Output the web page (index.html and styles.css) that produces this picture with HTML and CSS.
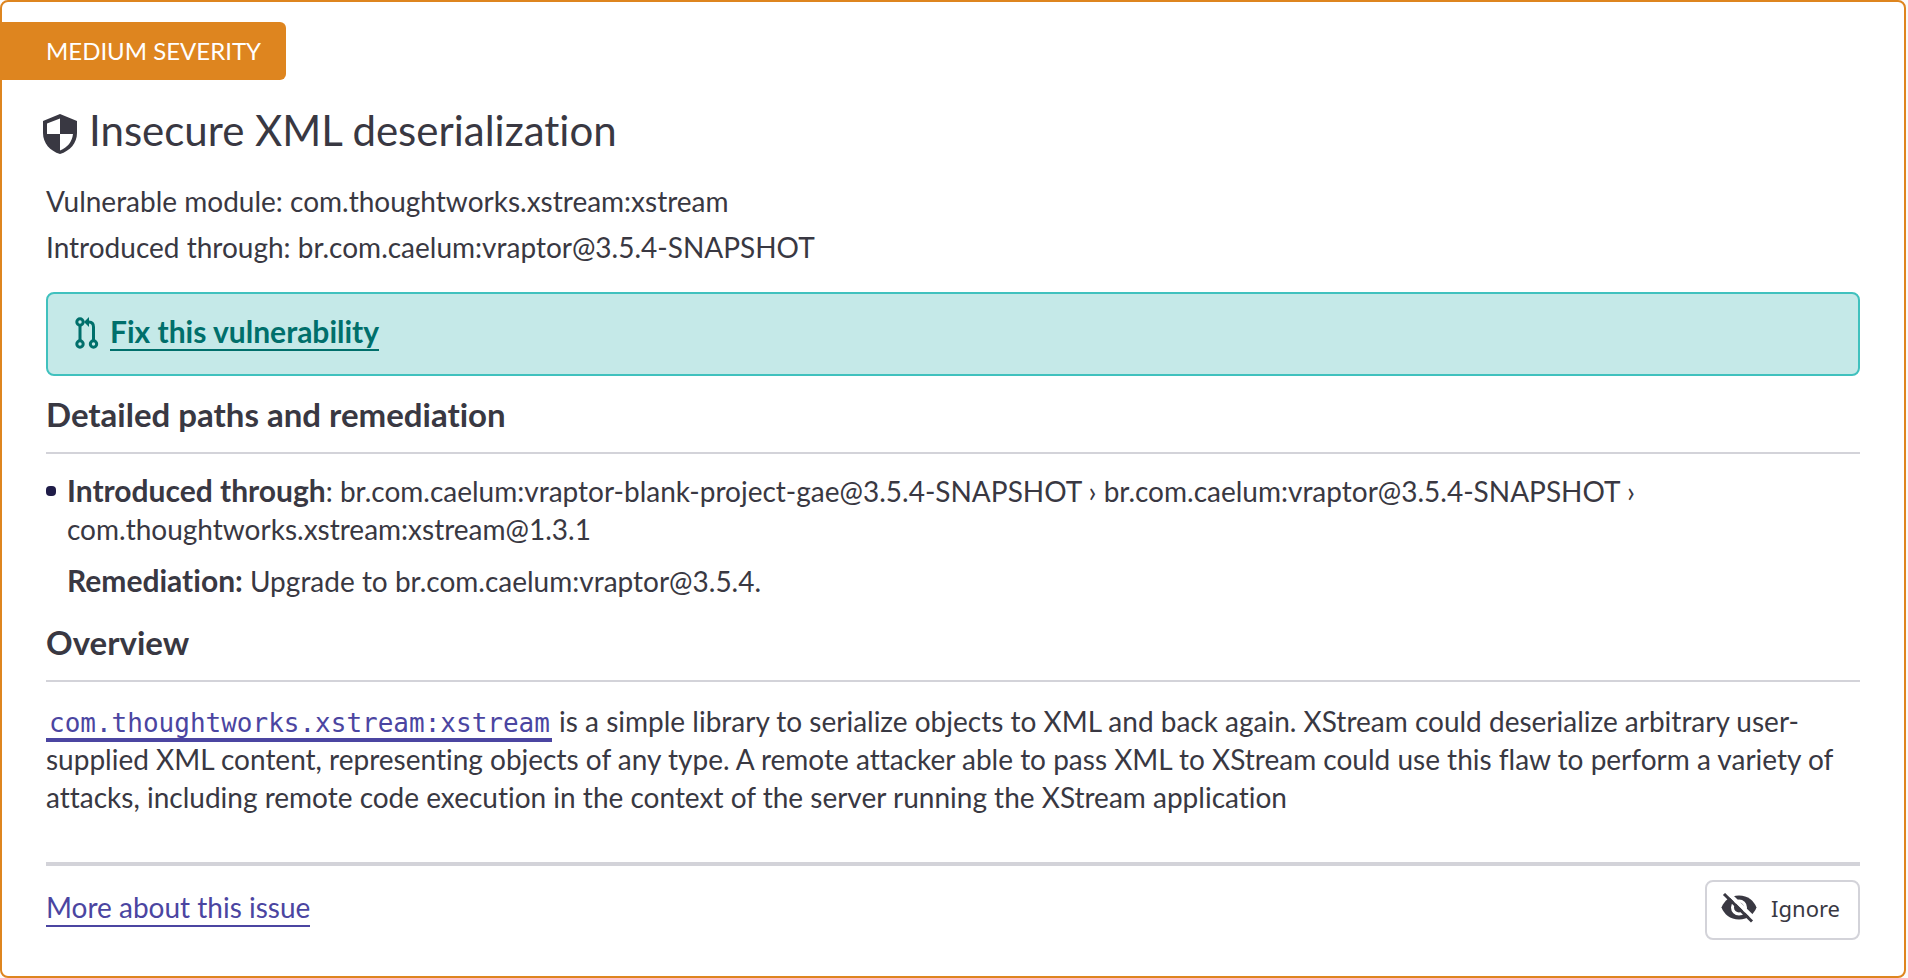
FILE: index.html
```html
<!DOCTYPE html>
<html lang="en">
<head>
<meta charset="utf-8">
<meta name="viewport" content="width=device-width, initial-scale=1">
<title>Insecure XML deserialization</title>
<link rel="stylesheet" href="styles.css">
</head>
<body>
<article class="card">
  <span class="badge">MEDIUM SEVERITY</span>
  <h1 class="title">
    <svg class="shield" viewBox="0 0 34 40" aria-hidden="true">
      <path fill="currentColor" fill-rule="evenodd" d="M17 0 34 7V19C34 29 27 37 17 40 7 37 0 29 0 19V7ZM17 4.500V20H30C29 28 24.500 33.500 17 36.500V20H4V9.500Z"/>
    </svg>
    Insecure XML deserialization
  </h1>
  <ul class="meta">
    <li>Vulnerable module: com.thoughtworks.xstream:xstream</li>
    <li>Introduced through: br.com.caelum:vraptor@3.5.4-SNAPSHOT</li>
  </ul>
  <div class="fix">
    <svg class="pull" viewBox="0 0 24 32" aria-hidden="true">
      <g fill="none" stroke="currentColor" stroke-width="3">
        <circle cx="5" cy="5" r="3.200"/><circle cx="5" cy="27" r="3.200"/><circle cx="18.500" cy="27" r="3.200"/>
        <path d="M5 8v16M18.500 24V10Q18.500 5 14 5H12"/>
      </g>
      <path fill="currentColor" d="M9 5 14 0V10Z"/>
    </svg>
    <a class="fix-link" href="#fix">Fix this vulnerability</a>
  </div>
  <h2 class="heading">Detailed paths and remediation</h2>
  <ul class="paths">
    <li class="path">
      <p class="text"><strong>Introduced through</strong>: br.com.caelum:vraptor-blank-project-gae@3.5.4-SNAPSHOT › br.com.caelum:vraptor@3.5.4-SNAPSHOT › com.thoughtworks.xstream:xstream@1.3.1</p>
      <p class="text"><strong>Remediation:</strong> Upgrade to br.com.caelum:vraptor@3.5.4.</p>
    </li>
  </ul>
  <h2 class="heading">Overview</h2>
  <p class="text overview"><a class="package" href="#package"><code>com.thoughtworks.xstream:xstream</code></a> is a simple library to serialize objects to XML and back again. XStream could deserialize arbitrary user-supplied XML content, representing objects of any type. A remote attacker able to pass XML to XStream could use this flaw to perform a variety of attacks, including remote code execution in the context of the server running the XStream application</p>
  <footer class="footer">
    <a class="more" href="#more">More about this issue</a>
    <button class="ignore" type="button">
      <svg class="eye" viewBox="0 0 36 30" aria-hidden="true">
        <path fill="currentColor" d="M18 2.500C27 2.500 33 8 35.500 14.500 33 21 27 26.500 18 26.500S3 21 .5 14.500C3 8 9 2.500 18 2.500Z"/>
        <circle cx="18" cy="14.500" r="6.500" fill="none" stroke="#fff" stroke-width="3"/>
        <path stroke="#fff" stroke-width="4" d="M6 -1 34 26.500"/>
        <path stroke="currentColor" stroke-width="3" d="M3 1 31 28.500"/>
      </svg>
      Ignore
    </button>
  </footer>
</article>
</body>
</html>
```
FILE: styles.css
```css
* {
  box-sizing: border-box;
}

body {
  margin: 0;
  padding-right: 2px;
  background: #fafafc;
  color: #393842;
  font: 28px/38px Lato, "Open Sans", sans-serif;
  font-variant-ligatures: none;
}

h1, h2, p, ul {
  margin: 0;
  padding: 0;
}

ul {
  list-style: none;
}

strong {
  font-size: 30px;
  line-height: 36px;
}

.card {
  padding: 20px 44px 36px;
  border: 2px solid #de851f;
  border-radius: 8px;
  background: #fff;
}

.badge {
  display: block;
  width: fit-content;
  margin-left: -44px;
  padding: 10px 25px 10px 44px;
  border-radius: 0 6px 6px 0;
  background: #de851f;
  color: #fff;
  font-size: 24px;
}

.title {
  display: flex;
  align-items: center;
  gap: 12px;
  margin: 24px 0 22px -3px;
  font-size: 42px;
  font-weight: 400;
  line-height: 52px;
}

.shield {
  width: 34px;
  height: 40px;
  margin-top: 8px;
}

.meta {
  line-height: 46px;
}

.fix {
  display: flex;
  align-items: center;
  gap: 11px;
  margin: 22px 0 18px;
  padding: 19px 27px 23px;
  border: 2px solid #40c1be;
  border-radius: 8px;
  background: #c5e9e8;
  color: #006f6b;
}

.pull {
  width: 24px;
  height: 32px;
  margin-top: 2px;
}

.fix-link {
  border-bottom: 2px solid;
  color: inherit;
  font-size: 30px;
  font-weight: 700;
  line-height: 36px;
  text-decoration: none;
}

.heading {
  padding-bottom: 18px;
  border-bottom: 2px solid #d3d3d9;
  font-size: 33px;
  line-height: 40px;
}

.paths {
  margin: 18px 0 22px;
}

.path {
  display: grid;
  gap: 14px;
  position: relative;
  padding-left: 21px;
}

.path::before {
  content: "";
  position: absolute;
  top: 14px;
  left: 0;
  width: 10px;
  height: 10px;
  border-radius: 4px;
  background: #1f1c48;
}

.overview {
  margin-top: 20px;
}

.package {
  padding: 0 2px 0 3px;
  border-bottom: 4px solid;
  color: #4b45a1;
  text-decoration: none;
}

.package code {
  font: 26px/30px "DejaVu Sans Mono", monospace;
}

.footer {
  display: flex;
  align-items: flex-start;
  justify-content: space-between;
  margin-top: 46px;
  padding-top: 14px;
  border-top: 4px solid #d3d3d9;
}

.more {
  margin-top: 9px;
  border-bottom: 2px solid;
  color: #4b45a1;
  line-height: 36px;
  text-decoration: none;
}

.ignore {
  display: flex;
  align-items: center;
  gap: 14px;
  padding: 9px 18px 13px 14px;
  border: 2px solid #d3d3d9;
  border-radius: 8px;
  background: #fff;
  color: inherit;
  font: 22px/34px "Noto Sans", sans-serif;
}

.eye {
  width: 36px;
  height: 30px;
}
```
